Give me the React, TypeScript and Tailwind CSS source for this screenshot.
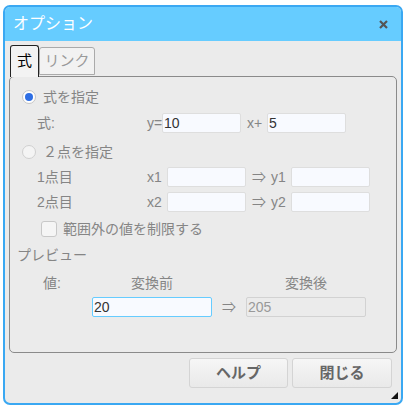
import React from 'react'

const font = { fontFamily: '"Liberation Sans", "Noto Sans CJK JP", sans-serif' }

const TextBox = ({ value, w, focus, disabled }: { value?: string; w: string; focus?: boolean; disabled?: boolean }) => (
  <div
    className={`${w} h-[20px] rounded-[2px] border flex items-center pl-[1px] text-[14px] leading-none ${
      focus
        ? 'border-[#66ccff] bg-[#f8faff] text-[#333]'
        : disabled
          ? 'border-[#d2d2d2] bg-[#ebebeb] text-[#999]'
          : 'border-[#dedede] bg-[#f8faff] text-[#333]'
    }`}
  >
    {value}
  </div>
)

const Radio = ({ checked }: { checked?: boolean }) => (
  <div
    className={`w-[14px] h-[14px] rounded-full border flex items-center justify-center ${
      checked ? 'border-[#c6c6c6] bg-white' : 'border-[#d0d0d0] bg-[#f4f4f4]'
    }`}
  >
    {checked && <div className="w-[8px] h-[8px] rounded-full bg-[#2f6fe4]" />}
  </div>
)

export default function App() {
  return (
    <div className="w-[408px] h-[410px] bg-white pt-[5px] pl-[3px]" style={font}>
      <div className="relative w-[400px] h-[400px] border-2 border-[#3aa8f2] rounded-[7px] overflow-hidden bg-[#ebebeb] flex flex-col">
        {/* title bar */}
        <div className="h-[34px] bg-[#66ccff] flex items-center justify-between pl-[8px] pr-[13px] shrink-0">
          <span className="text-white text-[16px]">オプション</span>
          <svg width="9" height="9" viewBox="0 0 9 9">
            <path d="M1 1 L8 8 M8 1 L1 8" stroke="#555" strokeWidth="2.2" />
          </svg>
        </div>

        <div className="px-[4px] pt-[4px] flex flex-col">
          {/* tabs */}
          <div className="flex items-end pl-[1px] relative z-10 -mb-[1px]">
            <div className="w-[29px] h-[32px] border border-b-0 border-[#222] rounded-t-[3px] bg-[#f3f3f3] flex items-center justify-center text-[15px] text-black">
              式
            </div>
            <div className="w-[56px] h-[28px] mb-[2px] border border-[#aaa] rounded-t-[3px] bg-[#f2f2f2] flex items-center justify-center text-[15px] text-[#9a9a9a]">
              リンク
            </div>
          </div>

          {/* panel */}
          <div className="h-[277px] border border-[#8a8a8a] rounded-[5px] flex flex-col text-[14px] text-[#858585] leading-none">
            <div className="mt-[10px] h-[19px] flex items-center pl-[12px]">
              <Radio checked />
              <span className="ml-[7px]">式を指定</span>
            </div>

            <div className="mt-[7px] h-[19px] flex items-center pl-[27px]">
              <span className="w-[110px]">式:</span>
              <span className="w-[15px]">y=</span>
              <TextBox w="w-[79px]" value="10" />
              <span className="ml-[6px] w-[20px]">x+</span>
              <TextBox w="w-[79px]" value="5" />
            </div>

            <div className="mt-[10px] h-[19px] flex items-center pl-[12px]">
              <Radio />
              <span className="ml-[7px]">２点を指定</span>
            </div>

            <div className="mt-[6px] h-[19px] flex items-center pl-[27px]">
              <span className="w-[110px]">1点目</span>
              <span className="w-[20px]">x1</span>
              <TextBox w="w-[79px]" />
              <span className="ml-[6px] w-[19px]">⇒</span>
              <span className="w-[20px]">y1</span>
              <TextBox w="w-[79px]" />
            </div>

            <div className="mt-[6px] h-[19px] flex items-center pl-[27px]">
              <span className="w-[110px]">2点目</span>
              <span className="w-[20px]">x2</span>
              <TextBox w="w-[79px]" />
              <span className="ml-[6px] w-[19px]">⇒</span>
              <span className="w-[20px]">y2</span>
              <TextBox w="w-[79px]" />
            </div>

            <div className="mt-[8px] h-[19px] flex items-center pl-[31px]">
              <div className="w-[16px] h-[16px] rounded-[3px] border border-[#c8c8c8] bg-[#f5f5f5]" />
              <span className="ml-[6px]">範囲外の値を制限する</span>
            </div>

            <div className="mt-[7px] h-[19px] flex items-center pl-[7px]">
              <span>プレビュー</span>
            </div>

            <div className="mt-[9px] h-[19px] flex items-center pl-[33px]">
              <span className="w-[49px]">値:</span>
              <span className="w-[120px] text-center">変換前</span>
              <span className="w-[34px]" />
              <span className="w-[120px] text-center">変換後</span>
            </div>

            <div className="mt-[5px] h-[20px] flex items-center pl-[82px]">
              <TextBox w="w-[120px]" value="20" focus />
              <span className="w-[34px] text-center">⇒</span>
              <TextBox w="w-[120px]" value="205" disabled />
            </div>
          </div>

          {/* buttons */}
          <div className="mt-[5px] flex justify-end gap-[4px] pr-[5px]">
            <button className="w-[99px] h-[30px] rounded-[3px] border border-[#d4d4d4] bg-gradient-to-b from-[#f6f6f6] to-[#e9e9e9] text-[15px] font-bold text-[#666]">
              ヘルプ
            </button>
            <button className="w-[100px] h-[30px] rounded-[3px] border border-[#d4d4d4] bg-gradient-to-b from-[#f6f6f6] to-[#e9e9e9] text-[15px] font-bold text-[#666]">
              閉じる
            </button>
          </div>
        </div>

        {/* resize grip */}
        <svg className="absolute right-[3px] bottom-[4px]" width="7" height="7" viewBox="0 0 7 7">
          <polygon points="7,0 7,7 0,7" fill="#111" />
        </svg>
      </div>
    </div>
  )
}
